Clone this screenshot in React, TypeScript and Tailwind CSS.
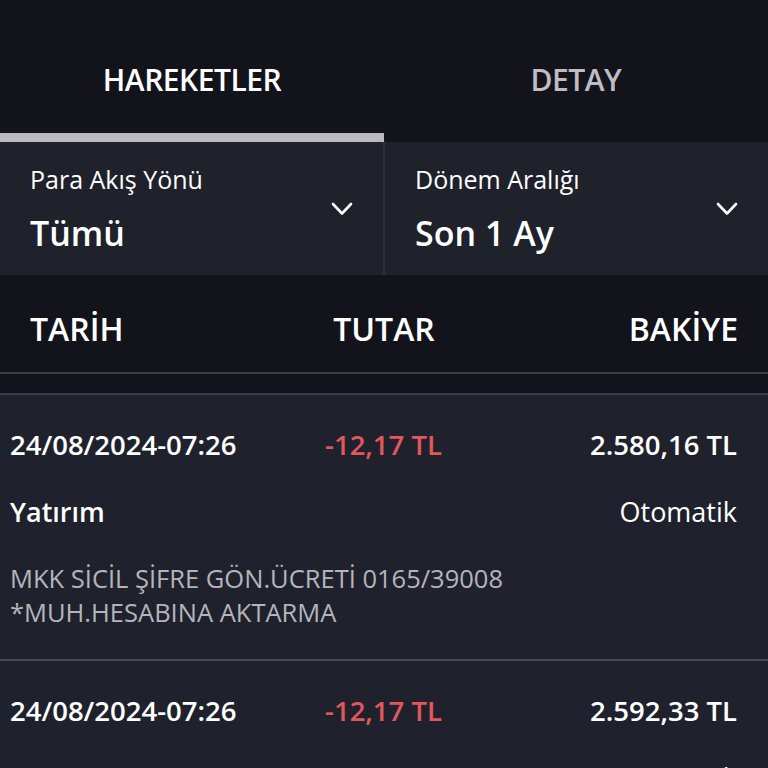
const rows = [
  {
    date: '24/08/2024-07:26',
    amount: '-12,17 TL',
    balance: '2.580,16 TL',
    type: 'Yatırım',
    channel: 'Otomatik',
    desc: ['MKK SİCİL ŞİFRE GÖN.ÜCRETİ 0165/39008', '*MUH.HESABINA AKTARMA'],
  },
  {
    date: '24/08/2024-07:26',
    amount: '-12,17 TL',
    balance: '2.592,33 TL',
    type: 'Yatırım',
    channel: 'Otomatik',
    desc: ['MKK SİCİL ŞİFRE GÖN.ÜCRETİ 0165/39008', '*MUH.HESABINA AKTARMA'],
  },
];

const Chevron = () => (
  <svg width="22" height="14" viewBox="0 0 22 14" fill="none" className="shrink-0">
    <path d="M2 2 L11 11.5 L20 2" stroke="white" strokeWidth="2.6" strokeLinecap="round" strokeLinejoin="round" />
  </svg>
);

const Filter = ({ label, value, border }: { label: string; value: string; border?: boolean }) => (
  <div className={`flex-1 flex items-center justify-between pl-[30px] pr-[30px] ${border ? 'border-r-2 border-[#2e313b]' : ''}`}>
    <div className="flex flex-col">
      <span className="text-[25px] leading-[36px] text-white">{label}</span>
      <span className="text-[34px] leading-[48px] font-semibold text-white mt-[12px]">{value}</span>
    </div>
    <Chevron />
  </div>
);

const App = () => {
  return (
    <div className="w-[768px] h-[768px] overflow-hidden bg-[#13131b] font-['Open_Sans',sans-serif]">
      <div className="flex h-[133px]">
        <div className="flex-1 flex items-center justify-center pt-[25px] text-[30px] font-semibold text-white tracking-[-0.5px]">
          HAREKETLER
        </div>
        <div className="flex-1 flex items-center justify-center pt-[25px] text-[30px] font-semibold text-[#bdbdc3] tracking-[-0.5px]">
          DETAY
        </div>
      </div>
      <div className="flex h-[9px]">
        <div className="w-[384px] bg-[#b9b9be]" />
      </div>

      <div className="flex h-[133px] bg-[#1f222b]">
        <Filter label="Para Akış Yönü" value="Tümü" border />
        <Filter label="Dönem Aralığı" value="Son 1 Ay" />
      </div>

      <div className="grid grid-cols-3 items-center h-[97px] pt-[10px] px-[30px] text-[32px] font-semibold text-white">
        <span>TARİH</span>
        <span className="text-center">TUTAR</span>
        <span className="text-right">BAKİYE</span>
      </div>
      <div className="h-[2px] bg-[#3a3d46]" />
      <div className="h-[19px]" />
      <div className="h-[2px] bg-[#3a3d45]" />

      <div className="bg-[#1f222c]">
        {rows.map((r, i) => (
          <div key={i} className={`pl-[10px] pr-[31px] pt-[30px] pb-[30px] ${i === 0 ? 'border-b-2 border-[#474b55]' : ''}`}>
            <div className="grid grid-cols-3 items-center text-[27.5px] leading-[40px] font-semibold">
              <span className="text-white">{r.date}</span>
              <span className="text-center text-[#e2575d] pl-[20px]">{r.amount}</span>
              <span className="text-right text-white">{r.balance}</span>
            </div>
            <div className="flex justify-between items-center text-[27px] leading-[40px] mt-[27px]">
              <span className="font-semibold text-white">{r.type}</span>
              <span className="text-white">{r.channel}</span>
            </div>
            <div className="mt-[29px] text-[25.5px] leading-[34px] text-[#b4b5ba]">
              {r.desc.map((d) => (
                <div key={d}>{d}</div>
              ))}
            </div>
          </div>
        ))}
      </div>
    </div>
  );
};

export default App;
